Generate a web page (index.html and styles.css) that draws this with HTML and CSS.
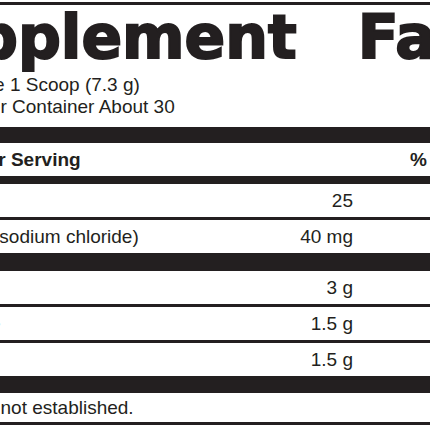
FILE: index.html
```html
<!DOCTYPE html>
<html lang="en">

<head>
    <meta charset="UTF-8">
    <meta name="viewport" content="width=device-width, initial-scale=1.0">
    <title>Supplement Facts</title>
    <link rel="stylesheet" href="styles.css">
</head>

<body>
    <div class="label">
        <!-- title -->
        <h1 class="title"><span>Supplement</span><span>Facts</span></h1>

        <div class="serving">
            <p>Serving Size 1 Scoop (7.3 g)</p>
            <p>Servings Per Container About 30</p>
        </div>

        <!-- table -->
        <div class="row head">
            <span>Amount Per Serving</span>
            <span class="amount"></span>
            <span class="dv">% Daily Value</span>
        </div>
        <div class="row bar-mid">
            <span>Calories</span>
            <span class="amount">25</span>
            <span class="dv"></span>
        </div>
        <div class="row">
            <span>Sodium (as sodium chloride)</span>
            <span class="amount">40 mg</span>
            <span class="dv">2%</span>
        </div>
        <div class="row bar-thick">
            <span>L-Leucine</span>
            <span class="amount">3 g</span>
            <span class="dv">†</span>
        </div>
        <div class="row">
            <span>L-Isoleucine</span>
            <span class="amount">1.5 g</span>
            <span class="dv">†</span>
        </div>
        <div class="row">
            <span>L-Valine</span>
            <span class="amount">1.5 g</span>
            <span class="dv">†</span>
        </div>

        <div class="note">†Daily Value not established.</div>
    </div>
</body>

</html>
```

FILE: styles.css
```css
/* page */
html,
body {
    margin: 0;
    overflow: hidden;
    background-color: #fff;
}

body {
    font-family: "Liberation Sans", Arial, sans-serif;
    color: #231f20;
}

/* label box, wider than the window */
.label {
    width: 662px;
    margin: 2px 0 0 -102px;
    border-top: 3px solid #231f20;
    border-bottom: 3px solid #231f20;
}

.title {
    display: flex;
    gap: 61px;
    margin: 2px 0 0 -9px;
    font-family: "DejaVu Sans", sans-serif;
    font-weight: bold;
    font-size: 60px;
    line-height: 60px;
    white-space: nowrap;
    -webkit-text-stroke: 2px #231f20; /* heavier, like a black weight */
}

.serving {
    margin: 7px 0 9px;
    font-size: 19px;
    line-height: 22px;
}

.serving p {
    margin: 0;
}

.row {
    display: grid;
    grid-template-columns: 1fr 100px 207px;
    padding: 6px 0 5px;
    border-top: 3px solid #231f20;
    font-size: 19px;
    line-height: 22px;
    white-space: nowrap;
}

.row.head {
    font-weight: bold;
    border-top-width: 16px;
}

.row.bar-mid {
    border-top-width: 8px;
}

.row.bar-thick {
    border-top-width: 18px;
}

.amount {
    text-align: right;
}

.dv {
    padding-left: 57px;
    text-align: center;
}

.head .dv {
    text-align: left;
}

.note {
    padding: 4px 0 3px;
    border-top: 17px solid #231f20;
    font-size: 19px;
    line-height: 22px;
    text-indent: -8px;
}
```
